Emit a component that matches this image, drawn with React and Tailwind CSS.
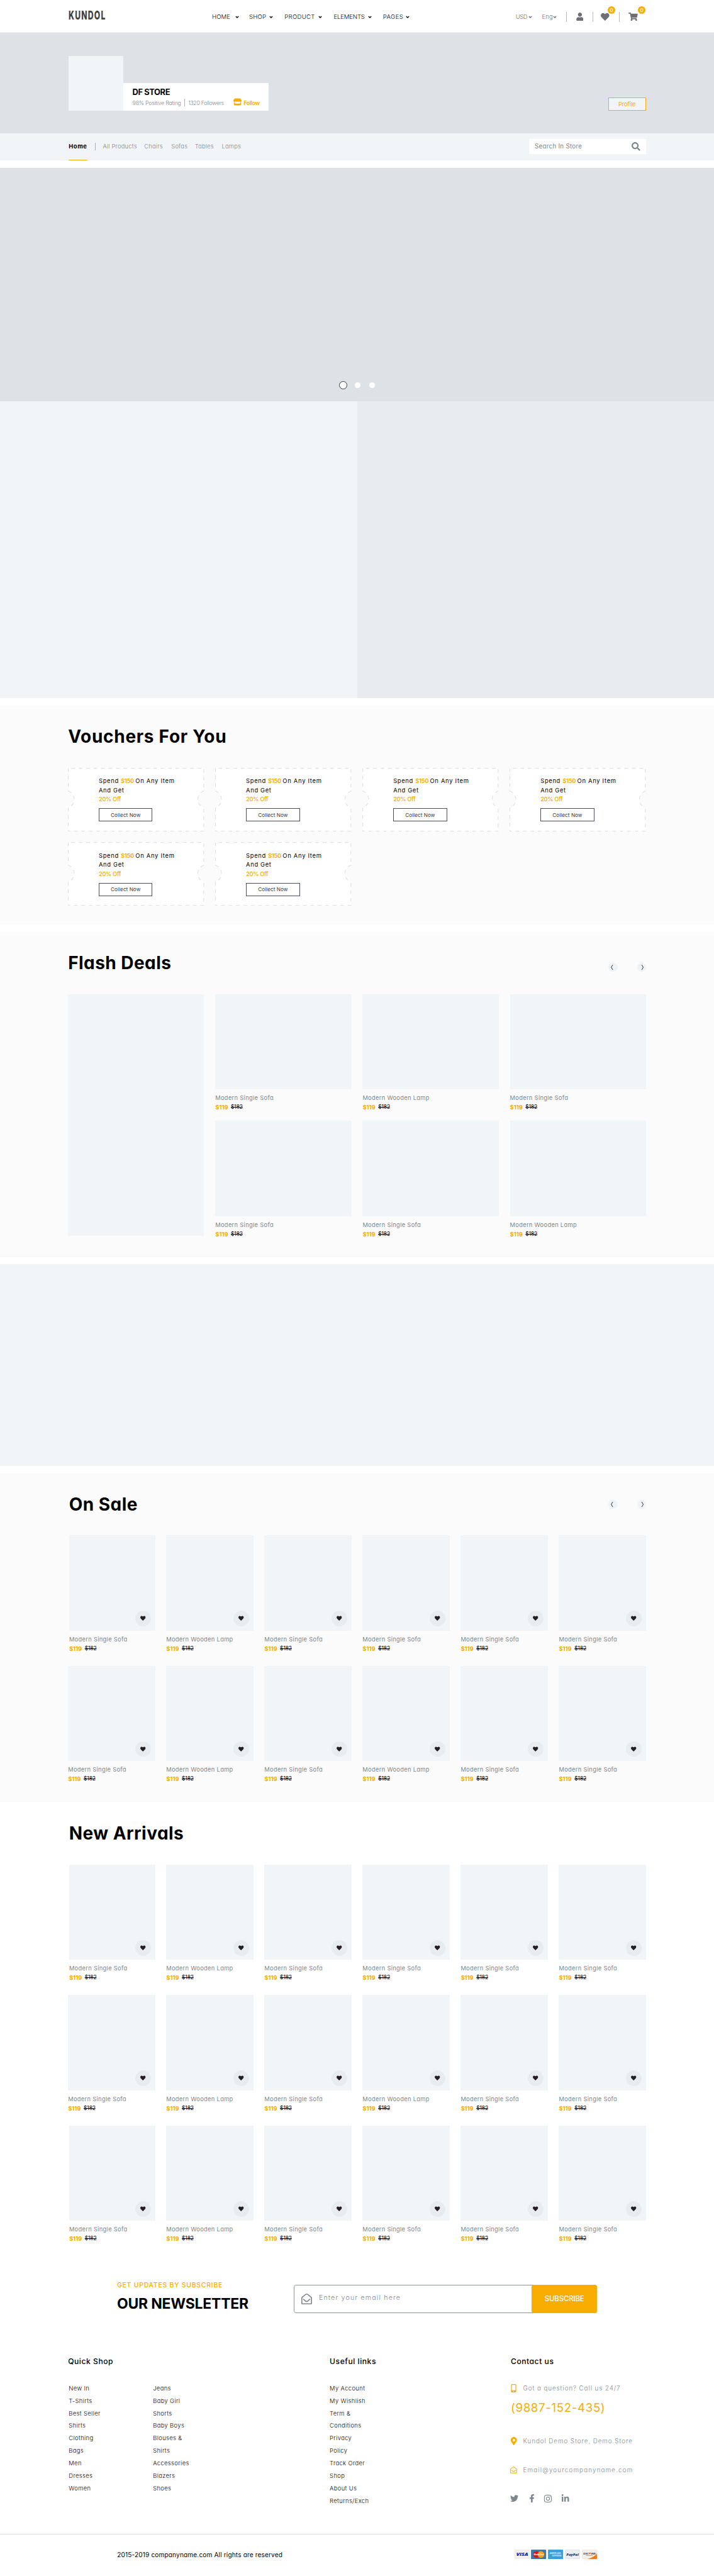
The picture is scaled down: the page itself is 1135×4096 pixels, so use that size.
import React from "react";
import {
  FaUser, FaHeart, FaShoppingCart, FaSearch, FaStore, FaMobileAlt, FaMapMarkerAlt,
  FaRegEnvelopeOpen, FaTwitter, FaFacebookF, FaInstagram, FaLinkedinIn,
} from "react-icons/fa";

const SOFA = "Modern Single Sofa";
const LAMP = "Modern Wooden Lamp";

const FLASH = [
  [SOFA, LAMP, SOFA],
  [SOFA, SOFA, LAMP],
];
const ROW_A = [SOFA, LAMP, SOFA, SOFA, SOFA, SOFA];
const ROW_B = [SOFA, LAMP, SOFA, LAMP, SOFA, SOFA];

function Caret() {
  return (
    <svg viewBox="0 0 10 7" className="h-[4.2px] w-[6px] shrink-0">
      <path d="M1.4 1.5 L5 5 L8.6 1.5" fill="none" stroke="currentColor" strokeWidth="2.3" />
    </svg>
  );
}

function Badge({ className }) {
  return (
    <span className={`absolute -top-[10.6px] flex h-[12.4px] w-[12.4px] items-center justify-center rounded-full bg-[#f9ad00] text-[8.2px] font-medium text-white ${className}`}>
      0
    </span>
  );
}

function Header() {
  return (
    <header className="flex h-[52px] items-center border-b border-[#eceef0] pb-[0.6px] pl-[109.3px] pt-[3.4px]">
      <div className="w-[227.7px] pb-[3px]">
        <span className="inline-block origin-left scale-x-[0.64] text-[19px] font-extrabold leading-none tracking-[0.1em] text-[#3f3f3f]">
          KUNDOL
        </span>
      </div>
      <nav className="grid grid-cols-[59px_56.2px_78.4px_78.2px_50px] text-[9.6px] font-light leading-none text-black">
        <a className="flex items-center gap-[8px] tracking-[0.009em]">HOME <Caret /></a>
        <a className="flex items-center gap-[5px] tracking-[0.021em]">SHOP <Caret /></a>
        <a className="flex items-center gap-[5px] tracking-[0.031em]">PRODUCT <Caret /></a>
        <a className="flex items-center gap-[5px] tracking-[-0.019em]">ELEMENTS <Caret /></a>
        <a className="flex items-center gap-[3.7px] tracking-[0.044em]">PAGES <Caret /></a>
      </nav>
      <div className="ml-[160.9px] flex items-center text-[9.4px] leading-none text-[#6f6e76]">
        <span className="flex w-[41.8px] items-center gap-[2px] font-light tracking-[-0.038em]">USD <Caret /></span>
        <span className="flex w-[38.8px] items-center gap-[0.6px] font-light tracking-[0.023em]">Eng <Caret /></span>
        <i className="h-[15.4px] w-px bg-[#b9b9bc]" />
        <span className="flex w-[40.4px] justify-center"><FaUser className="h-[13px] w-[11.8px]" /></span>
        <i className="h-[15.4px] w-px bg-[#b9b9bc]" />
        <span className="flex w-[41.3px] pl-[12.4px]">
          <span className="relative top-[0.4px]">
            <FaHeart className="h-[13.6px] w-[13.6px]" />
            <Badge className="left-[11px]" />
          </span>
        </span>
        <i className="h-[15.4px] w-px bg-[#b9b9bc]" />
        <span className="flex pl-[14px]">
          <span className="relative">
            <FaShoppingCart className="h-[13.2px] w-[14.8px]" />
            <Badge className="left-[15.1px]" />
          </span>
        </span>
      </div>
    </header>
  );
}

function StoreHero() {
  return (
    <section className="flex h-[159.6px] items-end justify-between bg-[#dee2e6] pb-[36px] pl-[109.3px] pr-[108.2px]">
      <div className="flex items-end">
        <div className="h-[86.3px] w-[86.3px] bg-[#f1f5f8]" />
        <div className="h-[43.7px] w-[231.4px] bg-white pl-[15px] pt-[8px]">
          <h2 className="text-[12.8px] font-bold leading-[14px] tracking-[-0.028em] text-black">DF STORE</h2>
          <div className="mt-[3px] flex items-center whitespace-nowrap text-[8.8px] font-light leading-[13px] text-[#7c868d]">
            <span className="w-[82px] tracking-[-0.027em]">98% Positive Rating</span>
            <i className="h-[12px] w-px bg-[#f9ad00]" />
            <span className="ml-[5.6px] w-[72px] tracking-[-0.037em]">1320 Followers</span>
            <FaStore className="relative -top-px h-[12px] w-[13px] text-[#f9ad00]" />
            <span className="ml-[3px] font-semibold tracking-[-0.034em] text-[#f9ad00]">Follow</span>
          </div>
        </div>
      </div>
      <button className="h-[20.7px] w-[60.3px] border border-[#f9ad00] bg-[#f1f5f8] text-[9.3px] leading-none tracking-[-0.013em] text-[#f9ad00]">
        Profile
      </button>
    </section>
  );
}

function StoreNav() {
  return (
    <section className="flex h-[43.2px] justify-between bg-[#f1f5f8] pl-[109.3px] pr-[108.2px]">
      <nav className="flex items-center text-[9.4px] font-light leading-none tracking-[0.02em] text-[#7c868d]">
        <a className="flex h-full w-[29.6px] items-center border-b-[1.2px] border-[#f9ad00] pt-[1px] font-bold tracking-[0.06em] text-black">Home</a>
        <i className="ml-[11.7px] h-[12.4px] w-px bg-[#f9ad00]" />
        <a className="ml-[11.9px] w-[65.8px]">All Products</a>
        <a className="w-[43px]">Chairs</a>
        <a className="w-[37.4px]">Sofas</a>
        <a className="w-[42.9px]">Tables</a>
        <a>Lamps</a>
      </nav>
      <div className="mt-[9.4px] flex h-[24.3px] w-[186.2px] items-center justify-between bg-white pl-[9.4px] pr-[8.8px] text-[#7c868d]">
        <span className="text-[9.8px] leading-none tracking-[0.026em]">Search In Store</span>
        <FaSearch className="h-[13.8px] w-[13.8px]" />
      </div>
    </section>
  );
}

function VoucherFrame() {
  return (
    <svg viewBox="0 0 366 171" preserveAspectRatio="none" className="absolute inset-0 h-full w-full">
      <path d="M0 0 H366 V62 A23.4 23.4 0 0 0 366 107 V171 H0 V107 A23.4 23.4 0 0 0 0 62 Z" fill="#fff" />
      <g fill="none" stroke="#dee2e6" strokeWidth="2" strokeDasharray="10 10">
        <path d="M9 1 H366" />
        <path d="M1 1 V62" />
        <path d="M1 107 V171" />
        <path d="M365 3 V62" />
        <path d="M365 110 V171" />
        <path d="M16 170 H366 M0 170 H6" />
        <path d="M0 62 A23.4 23.4 0 0 1 0 107" />
        <path d="M366 62 A23.4 23.4 0 0 0 366 107" />
      </g>
    </svg>
  );
}

function Voucher() {
  return (
    <div className="relative h-[101.1px]">
      <VoucherFrame />
      <div className="relative pl-[48.8px] pt-[14.3px] text-[9.4px] leading-[14.6px] text-black">
        <p className="whitespace-nowrap tracking-[0.07em]">
          <span>Spend</span>
          <span className="ml-[3.2px] font-semibold tracking-[-0.033em] text-[#f9ad00]">$150</span>
          <span className="ml-[2.4px] tracking-[0.076em]">On Any Item</span>
        </p>
        <p className="tracking-[0.07em]">And Get</p>
        <p className="font-medium tracking-[-0.04em] text-[#f9ad00]">20% Off</p>
        <button className="mt-[6.3px] block h-[21.3px] w-[85.5px] border border-[#4a4e58] text-[8.2px] leading-none tracking-[0.004em] text-[#343a40]">
          Collect Now
        </button>
      </div>
    </div>
  );
}

function Arrows({ className = "" }) {
  return (
    <div className={`flex gap-[31px] ${className}`}>
      {["M9 5.2 L4.8 12 L9 18.8", "M15 5.2 L19.2 12 L15 18.8"].map((d) => (
        <button key={d} className="h-[14.2px] w-[14.2px] rounded-full bg-[#f0f3f6]">
          <svg viewBox={d.startsWith("M9") ? "-3 0 24 24" : "3 0 24 24"} className="h-full w-full">
            <path d={d} fill="none" stroke="#222" strokeWidth="1.6" />
          </svg>
        </button>
      ))}
    </div>
  );
}

function SectionTitle({ children, className = "" }) {
  return <h2 className={`text-[28px] font-bold leading-[34px] text-black ${className}`}>{children}</h2>;
}

function Product({ name, like = false, className = "" }) {
  return (
    <article className={className}>
      <div className="flex h-[151.6px] items-end justify-end bg-[#f1f5f8] p-[6.8px]">
        {like && (
          <button className="flex h-[24.8px] w-[24.8px] items-center justify-center rounded-full bg-[#e9ecef] text-[#231f20]">
            <FaHeart className="h-[8.4px] w-[8.4px]" />
          </button>
        )}
      </div>
      <h3 className="mt-[5.7px] whitespace-nowrap text-[9.3px] leading-[15px] tracking-[0.034em] text-[#7c868d]">{name}</h3>
      <p className="flex text-[9.5px] leading-[15px]">
        <span className="w-[24.8px] font-bold tracking-[-0.008em] text-[#f9ad00]">$119</span>
        <span className="text-[8.4px] tracking-[-0.008em] text-black line-through">$182</span>
      </p>
    </article>
  );
}

function ProductGrid({ rows }) {
  return (
    <div className="grid grid-cols-6 gap-x-[17.7px] gap-y-[20.2px]">
      {rows.map((row, r) =>
        row.map((name, c) => (
          <Product key={`${r}-${c}`} name={name} like className={c === 0 && r % 2 === 0 ? "ml-[1.7px]" : ""} />
        ))
      )}
    </div>
  );
}

function Newsletter() {
  return (
    <section className="flex h-[118.2px] pl-[186px] pt-[19.9px]">
      <div className="w-[280.9px]">
        <p className="text-[10.4px] font-medium leading-[15px] tracking-[0.076em] text-[#f9ad00]">GET UPDATES BY SUBSCRIBE</p>
        <h2 className="mt-[7.9px] text-[23px] font-bold leading-[28px] tracking-[-0.01em] text-black">OUR NEWSLETTER</h2>
      </div>
      <form className="mt-[6.7px] flex h-[45.6px] w-[482px] rounded-[3.5px] border border-[#8b949a] bg-white">
        <div className="flex flex-1 items-center pl-[11px]">
          <FaRegEnvelopeOpen className="h-[17px] w-[17px] text-[#7c868d]" />
          <span className="ml-[11px] pb-[2px] text-[10.6px] font-light leading-none tracking-[0.112em] text-[#7c868d]">Enter your email here</span>
        </div>
        <button className="-m-px w-[103.5px] rounded-[3.5px] bg-[#f9ad00] text-[11.4px] font-medium leading-none tracking-[-0.008em] text-white">SUBSCRIBE</button>
      </form>
    </section>
  );
}

function LinkList({ items, className = "" }) {
  return (
    <ul className={`text-[9.4px] font-light leading-[19.9px] tracking-[0.04em] text-black ${className}`}>
      {items.map((t) => <li key={t}>{t}</li>)}
    </ul>
  );
}

function PayCard({ bg, children, stroke }) {
  return (
    <svg viewBox="0 0 41 26" className="h-[15.4px] w-[24.2px]" fontFamily="Open Sans, sans-serif">
      <rect x="0.5" y="0.5" width="40" height="25" rx="2" fill={bg} stroke={stroke} />
      {children}
    </svg>
  );
}

function Payments() {
  return (
    <div className="flex gap-[2.6px]">
      <PayCard bg="#f1f0ef" stroke="#f5dcb8">
        <text x="20.5" y="17.5" textAnchor="middle" fontSize="13" fontWeight="800" fontStyle="italic" fill="#12289b" textLength="32" lengthAdjust="spacingAndGlyphs">VISA</text>
      </PayCard>
      <PayCard bg="#3d78a8" stroke="#2d6a9b">
        <circle cx="15" cy="13" r="9" fill="#d8151d" />
        <circle cx="27" cy="13" r="9" fill="#f9a11b" />
        <text x="21" y="15.4" textAnchor="middle" fontSize="6.4" fontWeight="700" fontStyle="italic" fill="#fff" textLength="27" lengthAdjust="spacingAndGlyphs">MasterCard</text>
      </PayCard>
      <PayCard bg="#35a0dc" stroke="#2c93d0">
        <text x="19.5" y="12" textAnchor="middle" fontSize="6" fontWeight="700" fill="#d5eefb" textLength="30" lengthAdjust="spacingAndGlyphs">AMERICAN</text>
        <text x="24" y="18.6" textAnchor="middle" fontSize="6" fontWeight="700" fill="#d5eefb" textLength="25" lengthAdjust="spacingAndGlyphs">EXPRESS</text>
      </PayCard>
      <PayCard bg="#eceef0" stroke="#cfd9ea">
        <text x="20.5" y="16.5" textAnchor="middle" fontSize="10" fontWeight="800" fontStyle="italic" fill="#1d4b7c" textLength="33" lengthAdjust="spacingAndGlyphs">PayPal</text>
      </PayCard>
      <PayCard bg="#f0efee" stroke="#f5dccb">
        <path d="M40.5 10 C36 17 26 23 14 25.5 H40.5 Z" fill="#f9761b" />
        <circle cx="21" cy="10.2" r="2.6" fill="#f9761b" />
        <text x="4" y="12.8" fontSize="7" fontWeight="700" fill="#333" textLength="14" lengthAdjust="spacingAndGlyphs">DISC</text>
        <text x="24" y="12.8" fontSize="7" fontWeight="700" fill="#333" textLength="13" lengthAdjust="spacingAndGlyphs">VER</text>
        <text x="11" y="17.6" fontSize="3.6" fontWeight="700" fill="#555" textLength="18" lengthAdjust="spacingAndGlyphs">NETWORK</text>
      </PayCard>
    </div>
  );
}

function FooterHeading({ children }) {
  return <h4 className="text-[12.1px] font-medium leading-[16px] tracking-[0.045em] text-black">{children}</h4>;
}

function Footer() {
  return (
    <footer>
      <div className="flex h-[305px] pl-[108.2px] pt-[22.5px]">
        <div className="w-[415.9px]">
          <FooterHeading>Quick Shop</FooterHeading>
          <div className="mt-[25.1px] flex pl-[1.1px]">
            <LinkList className="w-[133.9px]" items={["New In", "T-Shirts", "Best Seller", "Shirts", "Clothing", "Bags", "Men", "Dresses", "Women"]} />
            <LinkList items={["Jeans", "Baby Girl", "Shorts", "Baby Boys", "Blouses &", "Shirts", "Accessories", "Blazers", "Shoes"]} />
          </div>
        </div>
        <div className="w-[287.9px]">
          <FooterHeading>Useful links</FooterHeading>
          <LinkList className="mt-[25.1px]" items={["My Account", "My Wishlish", "Term &", "Conditions", "Privacy", "Policy", "Track Order", "Shop", "About Us", "Returns/Exch"]} />
        </div>
        <div className="whitespace-nowrap">
          <FooterHeading>Contact us</FooterHeading>
          <p className="mt-[25.1px] flex items-center text-[9.8px] font-light leading-[20px] tracking-[0.094em] text-[#7c868d]">
            <span className="w-[19.6px]"><FaMobileAlt className="h-[13px] w-[9px] text-[#f9ad00]" /></span>
            Got a question? Call us 24/7
          </p>
          <p className="mt-[8.6px] text-[18.5px] leading-[24px] tracking-[0.04em] text-[#f9ad00]">(9887-152-435)</p>
          <p className="mt-[31.3px] flex items-center text-[9.8px] font-light leading-[20px] tracking-[0.095em] text-[#7c868d]">
            <span className="w-[19.6px]"><FaMapMarkerAlt className="h-[13px] w-[9.6px] text-[#f9ad00]" /></span>
            Kundol Demo Store, Demo Store
          </p>
          <p className="mt-[26px] flex items-center text-[9.8px] font-light leading-[20px] tracking-[0.119em] text-[#7c868d]">
            <span className="-ml-[0.6px] w-[20.2px]"><FaRegEnvelopeOpen className="h-[10.8px] w-[10.8px] text-[#f9ad00]" /></span>
            Email@yourcompanyname.com
          </p>
          <div className="-ml-[0.6px] mt-[28.2px] flex h-[14px] items-center text-[#7c868d]">
            <FaTwitter className="h-[13.2px] w-[13.2px]" />
            <FaFacebookF className="ml-[15px] h-[13.4px] w-[11px]" />
            <FaInstagram className="ml-[13px] h-[14px] w-[14px]" />
            <FaLinkedinIn className="relative -top-[0.4px] ml-[14.6px] h-[13.4px] w-[13.4px]" />
          </div>
        </div>
      </div>
      <div className="flex h-[66.8px] items-center justify-between border-t border-[#dadde3] pb-[2.6px] pl-[186.2px] pr-[186px]">
        <p className="text-[10.1px] leading-none tracking-[0.014em] text-black">2015-2019 companyname.com All rights are reserved</p>
        <Payments />
      </div>
    </footer>
  );
}

export default function App() {
  return (
    <div className="w-[1135px] overflow-hidden bg-white font-['Inter',sans-serif] [font-feature-settings:'cv11']">
      <Header />
      <StoreHero />
      <StoreNav />
      <section className="mt-[11.8px] flex h-[371.8px] items-end justify-center bg-[#dee2e6] pb-[19px]">
        <div className="flex items-center gap-[12px]">
          <i className="h-[13.2px] w-[13.2px] rounded-full border-[1.4px] border-[#343a40] bg-white" />
          <i className="h-[9px] w-[9px] rounded-full bg-white" />
          <i className="ml-[1.6px] h-[9px] w-[9px] rounded-full bg-white" />
        </div>
      </section>
      <section className="grid h-[471.8px] grid-cols-2">
        <div className="bg-[#f1f5f8]" />
        <div className="bg-[#e9ecef]" />
      </section>

      <section className="mt-[11.8px] h-[348.2px] bg-[#fbfbfb] px-[108.2px] pt-[32px]">
        <SectionTitle className="tracking-[0.025em]">Vouchers For You</SectionTitle>
        <div className="mt-[32.7px] grid grid-cols-4 gap-[17.7px]">
          {[0, 1, 2, 3, 4, 5].map((i) => <Voucher key={i} />)}
        </div>
      </section>

      <section className="mt-[11.8px] h-[516.6px] bg-[#fbfbfb] px-[108.2px] pt-[32px]">
        <div className="flex items-start justify-between">
          <SectionTitle className="tracking-[0.016em]">Flash Deals</SectionTitle>
          <Arrows className="mt-[17.1px]" />
        </div>
        <div className="mt-[32.8px] flex gap-[17.9px]">
          <div className="h-[384.7px] w-[216.2px] bg-[#f1f5f8]" />
          <div className="grid flex-1 grid-cols-3 gap-x-[17.9px] gap-y-[14.3px]">
            {FLASH.flat().map((name, i) => <Product key={i} name={name} />)}
          </div>
        </div>
      </section>

      <section className="mt-[11.9px] h-[320.3px] bg-[#f1f5f8]" />

      <section className="mt-[11.9px] h-[522.5px] bg-[#fbfbfb] px-[108.2px] pt-[32px]">
        <div className="flex items-center justify-between pl-[1.6px]">
          <SectionTitle className="tracking-[0.016em]">On Sale</SectionTitle>
          <Arrows />
        </div>
        <div className="mt-[32.6px]">
          <ProductGrid rows={[ROW_A, ROW_B]} />
        </div>
      </section>

      <section className="h-[740.8px] px-[108.2px] pt-[32.6px]">
        <SectionTitle className="pl-[1.6px] tracking-[0.016em]">New Arrivals</SectionTitle>
        <div className="mt-[33.1px]">
          <ProductGrid rows={[ROW_A, ROW_B, ROW_A]} />
        </div>
      </section>

      <Newsletter />
      <Footer />
    </div>
  );
}
